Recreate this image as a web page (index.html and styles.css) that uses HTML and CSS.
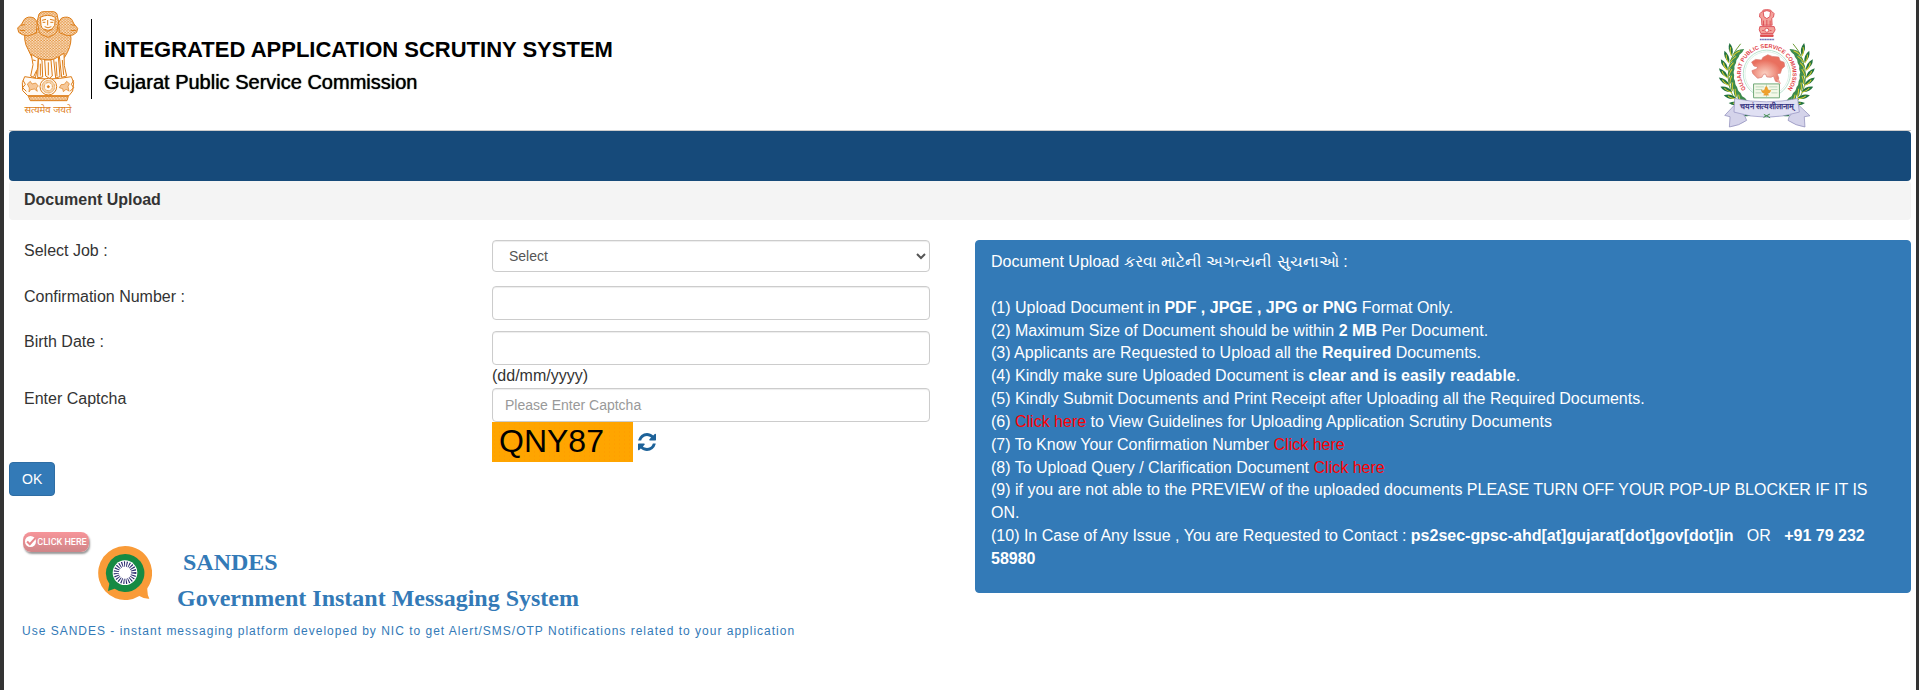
FILE: index.html
```html
<!DOCTYPE html>
<html lang="en">
<head>
    <meta charset="UTF-8">
    <meta name="viewport" content="width=device-width, initial-scale=1.0">
    <title>Integrated Application Scrutiny System</title>
    <link rel="stylesheet" href="styles.css">
</head>
<body>
    <div class="page">
        <!-- Header -->
        <header class="site-header">
            <svg class="emblem" viewBox="48 30 192 315" role="img" aria-label="Emblem of India">
                <defs>
                    <pattern id="mane" width="9" height="8" patternUnits="userSpaceOnUse">
                        <rect width="9" height="8" fill="#fbe6cf"/>
                        <path d="M0 2q3 5 5 0t4 1M1 7q3 3 6-1" fill="none" stroke="#dd7d18" stroke-width="2.4"/>
                    </pattern>
                </defs>
                <g stroke="#dd7d18" stroke-width="3" fill="#fffaf4" stroke-linejoin="round">
                    <path fill="url(#mane)" d="M76 88q-7 35 8 60l12 25 48 7 49-7q20-30 20-58l-5-32z"/>
                    <path fill="url(#mane)" d="M112 66l-10-12q-18-7-29 4l-8 14-12 12 3 13 11 7 17 4 25-9z"/>
                    <path fill="url(#mane)" d="M176 66l9-12q19-7 30 4l7 14 11 13-3 12-11 8-17 2-24-9z"/>
                    <path fill="url(#mane)" d="M117 42q5-8 15-7h27q13 1 13 13l4 18-4 18q1 14-11 20l-16 8-18-7q-12-6-11-20l-5-19z"/>
                    <path d="M121 52q22-12 45 0l-2 24q-8 16-20 18-17-3-21-18z"/>
                    <path fill="none" d="M126 61l12-3M150 58l13 3M128 67h8M151 67h9M143 60v16M134 80q10 7 20 0M131 87q13 8 26 0M62 76l13-2M60 91l15 1M212 74l13 2M212 92l16-1"/>
                    <path d="M94 163l5 31-7 34 14 6 7-31 2-28zM115 174l11 7 2 50-15 2zM134 180h19l4 48-9 7-11-7zM161 178l14-8 5 60-13 4zM178 168l14-8 1 37 7 31-15 4z"/>
                    <path fill="none" d="M99 180l8 2M121 191v36M145 187v39M168 185l3 44M187 180l4 45M101 230l9-19"/>
                    <path d="M74 230q70 14 140 0l7 18-3 25-11 14H83l-15-15-1-24z"/>
                    <path fill="url(#mane)" d="M85 289h120l-4 13H91z"/>
                    <circle cx="145" cy="260" r="25"/>
                    <circle cx="145" cy="260" r="19" fill="#f6d5ac" stroke-dasharray="2 2"/>
                    <circle cx="145" cy="260" r="12" stroke-dasharray="2 2"/>
                    <circle cx="145" cy="260" r="3" fill="#dd7d18"/>
                    <path fill="#f6c797" stroke-width="2" d="M82 252l9-8 5 8 11-3 8 9-6 6 3 10-9-7-11 2-5 7 1-12zM178 263l5-9 10-1 7-9 8 7-4 9 3 13-9-5-8 7-2-9z"/>
                    <path fill="none" d="M69 241l7 12-8 10 11 11M221 241l-7 12 7 10-11 11"/>
                </g>
                <text class="emblem-motto" x="144" y="338" text-anchor="middle">सत्यमेव जयते</text>
            </svg>
            <div class="brand">
                <h1>iNTEGRATED APPLICATION SCRUTINY SYSTEM</h1>
                <p>Gujarat Public Service Commission</p>
            </div>
            <svg class="gpsc-logo" viewBox="50 20 295 365" role="img" aria-label="Gujarat Public Service Commission">
                <defs>
                    <radialGradient id="mapFill" cx="40%" cy="70%">
                        <stop offset="0" stop-color="#fbd2c4"/>
                        <stop offset="1" stop-color="#e9705f"/>
                    </radialGradient>
                    <g id="leaf">
                        <path d="M79 222q-23-9-25-30 22 8 25 30z" fill="#23733f"/>
                        <path d="M79 220q0-22 22-34 3 25-22 34z" fill="#3d8b4c"/>
                        <path d="M78 223q-13-10-15-22M81 219q5-14 12-22" fill="none" stroke="#d8cc31" stroke-width="3"/>
                    </g>
                    <g id="branch">
                        <path d="M182 341Q85 326 80 226q3-60 38-98" fill="none" stroke="#6c9a36" stroke-width="3"/>
                        <use href="#leaf" transform="rotate(-72 197 218)"/>
                        <use href="#leaf" transform="rotate(-60 197 218)"/>
                        <use href="#leaf" transform="rotate(-48 197 218)"/>
                        <use href="#leaf" transform="rotate(-37 197 218)"/>
                        <use href="#leaf" transform="rotate(-26 197 218)"/>
                        <use href="#leaf" transform="rotate(-15 197 218)"/>
                        <use href="#leaf" transform="rotate(-4 197 218)"/>
                        <use href="#leaf" transform="rotate(7 197 218)"/>
                        <use href="#leaf" transform="rotate(18 197 218)"/>
                        <use href="#leaf" transform="rotate(29 197 218)"/>
                    </g>
                    <path id="ring" d="M148 279A78 78 0 1 1 246 279"/>
                </defs>
                <use href="#branch"/>
                <use href="#branch" transform="translate(394 0) scale(-1 1)"/>
                <circle cx="197" cy="218" r="91" fill="#fff"/>
                <g fill="none" stroke="#b9e2cf" stroke-width="3">
                    <circle cx="197" cy="218" r="71"/>
                    <circle cx="197" cy="218" r="66" stroke="#dff1e8"/>
                </g>
                <g fill="#f3a19a" stroke="#d9424a" stroke-width="2.5">
                    <path d="M181 32q4-8 16-7 12-1 17 7l5 5-2 10-5 5 1 20h-31l-1-20-6-5 1-10z"/>
                    <path d="M186 31q11-6 22 0l-2 15-9 6-9-6zM187 58v15M197 56v17M207 58v15" fill="#fff"/>
                    <path d="M176 76h43l3 10-6 11h-37l-5-11z"/>
                    <path d="M178 101h38v5h-38z" fill="#e5564e"/>
                    <circle cx="197" cy="87" r="6" fill="#fff"/>
                    <path d="M183 88h5M206 88h5"/>
                </g>
                <path d="M176 115h43" stroke="#6e6fb5" stroke-width="4" stroke-dasharray="4 1"/>
                <path d="M151 183l12-8 18 2 4-8 15-8 13 5 20 2 4 11 12 5 2 12-9 8-4 13-10 1 5 13-3 12-7-2-6-16-7 4-13-1-4-9-6 1-5 9-13 3-14-14-3-9 14-5 4-6-12-3z" fill="url(#mapFill)" stroke="#d8776d" stroke-width="2"/>
                <path d="M226 235l8 2 6 12-7-2z" fill="#efa99e"/>
                <text class="ring-text"><textPath href="#ring" startOffset="50%" text-anchor="middle">GUJARAT PUBLIC SERVICE COMMISSION</textPath></text>
                <path d="M157 249h78v42h-78z" fill="#f3f8e8" stroke="#70a878" stroke-width="3"/>
                <path d="M196 249v42M163 258h25M163 266h20M204 258h25M210 266h19M163 276h18M211 276h18" stroke="#9fc9a5" stroke-width="2" fill="none"/>
                <path d="M180 267q7 4 11-2 0-6 4-9 5 4 5 10 4 4 9 1-1 10-10 11l4 5h-16l4-5q-9-1-11-11z" fill="#f0a12c" stroke="#d58718"/>
                <path d="M102 310L70 344l16 4-2 31q30-4 52-20l-4-10zM290 310l37 35-17 3 2 31q-28-4-51-20l3-10z" fill="#d4d3ea" stroke="#8584b4" stroke-width="2"/>
                <path d="M100 293q96 20 190 0l5 41q-98 31-197 0z" fill="#e0e0f3" stroke="#8e8dbd" stroke-width="2"/>
                <text class="ribbon-text" x="197" y="325" text-anchor="middle">चयनं सत्यशीलानाम्</text>
                <path d="M187 350l19-10M207 351l-19-10" stroke="#3d8b4c" stroke-width="3"/>
            </svg>
        </header>

        <nav class="navbar" aria-label="Main"></nav>

        <h2 class="page-title">Document Upload</h2>

        <main class="content">
            <div class="left-column">
                <form action="#" method="post">
                    <div class="form-row form-row-select">
                        <label for="job">Select Job :</label>
                        <div class="field">
                            <select id="job" class="form-control">
                                <option>Select</option>
                            </select>
                        </div>
                    </div>
                    <div class="form-row">
                        <label for="confirmation">Confirmation Number :</label>
                        <div class="field">
                            <input type="text" id="confirmation" class="form-control">
                        </div>
                    </div>
                    <div class="form-row form-row-date">
                        <label for="birthdate">Birth Date :</label>
                        <div class="field">
                            <input type="text" id="birthdate" class="form-control">
                            <span class="hint">(dd/mm/yyyy)</span>
                        </div>
                    </div>
                    <div class="form-row form-row-captcha">
                        <label for="captcha">Enter Captcha</label>
                        <div class="field">
                            <input type="text" id="captcha" class="form-control" placeholder="Please Enter Captcha">
                            <div class="captcha">
                                <span class="captcha-code">QNY87</span>
                                <button type="button" class="refresh" aria-label="Refresh captcha">
                                    <svg viewBox="0 128 1536 1536" width="18" height="18" aria-hidden="true">
                                        <path fill="currentColor" d="M1511 1056q0 5-1 7-64 268-268 434.500t-478 166.500q-146 0-282.500-55t-243.500-157l-129 129q-19 19-45 19t-45-19-19-45v-448q0-26 19-45t45-19h448q26 0 45 19t19 45-19 45l-137 137q71 66 161 102t187 36q134 0 250-65t186-179q11-17 53-117 8-23 30-23h192q13 0 22.500 9.500t9.500 22.500zm25-800v448q0 26-19 45t-45 19h-448q-26 0-45-19t-19-45 19-45l138-138q-148-137-349-137-134 0-250 65t-186 179q-11 17-53 117-8 23-30 23h-199q-13 0-22.500-9.500t-9.500-22.500v-7q65-268 270-434.500t480-166.500q146 0 284 55.500t245 156.500l130-129q19-19 45-19t45 19 19 45z"/>
                                    </svg>
                                </button>
                            </div>
                        </div>
                    </div>
                    <button type="submit" class="btn">OK</button>
                </form>

                <!-- SANDES messaging promo -->
                <section class="sandes">
                    <div class="sandes-top">
                        <a href="#" class="click-here">
                            <svg viewBox="0 0 16 16" width="11" height="11" aria-hidden="true">
                                <circle cx="8" cy="8" r="8" fill="#fff"/>
                                <path d="M3 8l4 4 8-9" fill="none" stroke="#e8858a" stroke-width="3"/>
                            </svg>
                            CLICK HERE
                        </a>
                        <svg class="sandes-logo" viewBox="0 0 162 162" role="img" aria-label="Sandes">
                            <path d="M81 0a81 81 0 1 0 43 150q14 9 30 8-7-13-6-31A81 81 0 0 0 81 0z" fill="#f99b38"/>
                            <path d="M81 24a57 57 0 0 0-47 89l-4 22 20-7A57 57 0 1 0 81 24z" fill="#168a43"/>
                            <circle cx="81" cy="80" r="37" fill="#fff"/>
                            <circle cx="81" cy="80" r="26" fill="none" stroke="#26286c" stroke-width="16" stroke-dasharray="3 4"/>
                            <circle cx="81" cy="80" r="17" fill="#fff"/>
                        </svg>
                        <div class="sandes-name">
                            <a href="#">&nbsp;SANDES</a>
                            <a href="#">Government Instant Messaging System</a>
                        </div>
                    </div>
                    <a href="#" class="sandes-note">Use SANDES - instant messaging platform developed by NIC to get Alert/SMS/OTP Notifications related to your application</a>
                </section>
            </div>

            <!-- Instructions -->
            <aside class="instructions">
                <p class="intro">Document Upload કરવા માટેની અગત્યની સુચનાઓ :</p>
                <p>(1) Upload Document in <b>PDF , JPGE , JPG or PNG</b> Format Only.</p>
                <p>(2) Maximum Size of Document should be within <b>2 MB</b> Per Document.</p>
                <p>(3) Applicants are Requested to Upload all the <b>Required</b> Documents.</p>
                <p>(4) Kindly make sure Uploaded Document is <b>clear and is easily readable</b>.</p>
                <p>(5) Kindly Submit Documents and Print Receipt after Uploading all the Required Documents.</p>
                <p>(6) <a href="#">Click here</a> to View Guidelines for Uploading Application Scrutiny Documents</p>
                <p>(7) To Know Your Confirmation Number <a href="#">Click here</a></p>
                <p>(8) To Upload Query / Clarification Document <a href="#">Click here</a></p>
                <p>(9) if you are not able to the PREVIEW of the uploaded documents PLEASE TURN OFF YOUR POP-UP BLOCKER IF IT IS ON.</p>
                <p>(10) In Case of Any Issue , You are Requested to Contact : <b>ps2sec-gpsc-ahd[at]gujarat[dot]gov[dot]in</b> &nbsp; OR &nbsp; <b>+91 79 232 58980</b></p>
            </aside>
        </main>
    </div>
</body>
</html>
```
FILE: styles.css
```css
* {
    box-sizing: border-box;
}

body {
    margin: 0;
    font-family: "Liberation Sans", Arial, sans-serif;
    font-size: 16px;
    line-height: 1.42857;
    color: #333;
    background-color: #fff;
}

a {
    color: #337ab7;
    text-decoration: none;
}

.page {
    min-height: 100vh;
    padding: 0 5px;
    border-left: 4px solid #333;
    border-right: 3px solid #333;
}

/* Header */
.site-header {
    display: flex;
    align-items: flex-start;
    padding: 8px 95px 0 7px;
    height: 131px;
    border-bottom: 1px solid #ccc;
}

.emblem {
    width: 64px;
    height: 105px;
    margin-top: 2px;
}

.emblem-motto {
    font-family: "Noto Sans", sans-serif;
    font-size: 29px;
    fill: #dd7d18;
}

.brand {
    height: 80px;
    margin: 11px 0 0 11px;
    padding: 19px 0 0 12px;
    border-left: 1px solid #000;
    color: #000;
}

.brand h1 {
    margin: 0 0 8px;
    font-size: 22px;
    line-height: 24px;
}

.brand p {
    margin: 0;
    font-size: 20px;
    line-height: 24px;
    text-shadow: 0 0 1px #000;
}

.gpsc-logo {
    width: 98px;
    height: 121px;
    margin-left: auto;
}

.ring-text {
    font-size: 17px;
    font-weight: bold;
    fill: #df3d45;
}

.ribbon-text {
    font-size: 24px;
    font-weight: bold;
    fill: #373582;
}

.navbar {
    height: 50px;
    border-radius: 4px;
    background-color: #164a7a;
}

.page-title {
    margin: 0 0 20px;
    padding: 8px 15px;
    border-radius: 4px;
    background-color: #f4f4f4;
    font-size: 16px;
}

.content {
    display: grid;
    grid-template-columns: 1fr 1fr;
    gap: 30px;
    align-items: start;
}

/* Form */
.form-row {
    display: grid;
    grid-template-columns: 1fr 1fr;
    margin-bottom: 11px;
}

.form-row-select {
    margin-bottom: 14px;
}

.form-row-date,
.form-row-captcha {
    margin-bottom: 0;
}

.form-row label,
.field {
    padding: 0 15px;
}

.form-control {
    display: block;
    width: 100%;
    height: 34px;
    padding: 6px 12px;
    border: 1px solid #ccc;
    border-radius: 4px;
    background-color: #fff;
    box-shadow: inset 0 1px 1px rgba(0, 0, 0, 0.075);
    color: #555;
    font-family: inherit;
    font-size: 14px;
}

select.form-control {
    height: 32px;
}

.form-control::placeholder {
    color: #999;
}

.hint {
    display: block;
}

.captcha {
    display: flex;
    align-items: center;
    gap: 5px;
}

.captcha-code {
    width: 141px;
    height: 40px;
    padding-left: 7px;
    background-color: #ffa500;
    background-image: radial-gradient(#ff9f00 1px, transparent 1px);
    background-size: 5px 4px;
    color: #000;
    font-size: 32px;
    line-height: 38px;
}

.refresh {
    display: flex;
    padding: 0;
    border: 0;
    background: none;
    color: #1d6299;
}

.btn {
    display: block;
    padding: 6px 12px;
    border: 1px solid #2e6da4;
    border-radius: 4px;
    background-color: #337ab7;
    color: #fff;
    font-family: inherit;
    font-size: 14px;
    line-height: 20px;
}

/* SANDES */
.sandes {
    padding: 35px 13px 0;
}

.sandes-top {
    display: flex;
    align-items: flex-start;
}

.click-here {
    display: flex;
    align-items: center;
    justify-content: center;
    gap: 1px;
    width: 66px;
    height: 20px;
    margin: 1px 0 0 1px;
    border-radius: 8px;
    background-image: linear-gradient(#f7959a, #cf8588);
    box-shadow: 1px 2px 2px rgba(0, 0, 0, 0.4);
    color: #fff;
    font-family: Roboto, sans-serif;
    font-size: 9px;
    font-weight: 500;
    line-height: 12px;
    white-space: nowrap;
}

.click-here svg {
    flex: none;
}

.sandes-logo {
    width: 54px;
    height: 54px;
    margin: 15px 25px 0 9px;
}

.sandes-name {
    display: grid;
    padding-top: 13px;
    font-family: "Liberation Serif", "Times New Roman", serif;
    font-size: 24px;
    font-weight: bold;
    line-height: 36px;
}

.sandes-note {
    display: block;
    margin-top: 7px;
    font-size: 12px;
    letter-spacing: 1px;
}

/* Instructions */
.instructions {
    padding: 10px 15px 21px;
    border: 1px solid #337ab7;
    border-radius: 4px;
    background-color: #337ab7;
    color: #fff;
}

.instructions p {
    margin: 0;
}

.instructions .intro {
    margin-bottom: 23px;
}

.instructions a {
    color: #f00;
}

@media (max-width: 768px) {
    .content {
        grid-template-columns: 1fr;
    }

    .site-header {
        padding-right: 7px;
    }
}
```
